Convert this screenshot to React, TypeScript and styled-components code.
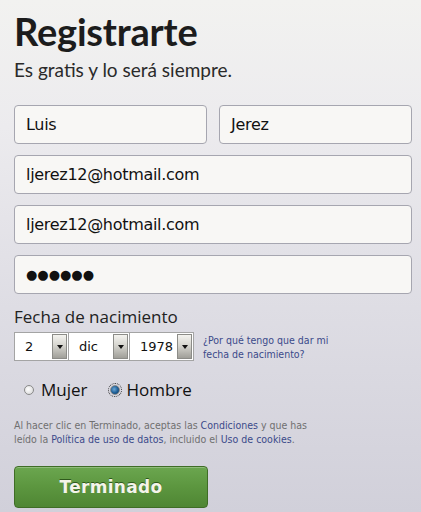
import React from 'react';
import styled, { createGlobalStyle } from 'styled-components';

const GlobalStyle = createGlobalStyle`
  html, body {
    margin: 0;
    padding: 0;
  }
  body {
    background: #d1d0da;
  }
`;

const Page = styled.div`
  width: 421px;
  height: 512px;
  box-sizing: border-box;
  padding: 10px 9px 0 14px;
  background: linear-gradient(to bottom, #f2f2f0 0%, #ecebee 25%, #dedde4 60%, #d1d0da 100%);
  display: flex;
  flex-direction: column;
  overflow: hidden;
`;

const Title = styled.h1`
  margin: 0;
  font-family: Lato, 'Open Sans', sans-serif;
  font-weight: 700;
  font-size: 38px;
  line-height: 42px;
  color: #1c1c1c;
  letter-spacing: -0.2px;
`;

const Subtitle = styled.p`
  margin: 6px 0 0;
  font-family: Lato, 'Open Sans', sans-serif;
  font-size: 19px;
  line-height: 24px;
  color: #2a2a2a;
`;

const Fields = styled.div`
  margin-top: 23px;
  display: flex;
  flex-direction: column;
  gap: 11px;
`;

const Row = styled.div`
  display: flex;
  gap: 12px;
`;

const TextField = styled.div<{ $secret?: boolean }>`
  width: 100%;
  height: 39px;
  flex-shrink: 1;
  box-sizing: border-box;
  border: 1px solid #a6a6b0;
  border-radius: 4px;
  background: #f8f7f5;
  display: flex;
  align-items: center;
  padding-left: 11px;
  font-family: 'DejaVu Sans', 'Open Sans', sans-serif;
  font-size: ${p => (p.$secret ? '13px' : '16px')};
  letter-spacing: ${p => (p.$secret ? '0' : '-0.3px')};
  color: #111;
`;

const Label = styled.div`
  margin-top: 11px;
  font-family: 'Open Sans', sans-serif;
  font-size: 17px;
  line-height: 24px;
  color: #222;
`;

const BirthRow = styled.div`
  margin-top: 3px;
  display: flex;
  align-items: center;
`;

const Selects = styled.div`
  display: flex;
  border: 1px solid #a4a4a4;
  background: #a4a4a4;
  gap: 1px;
`;

const Select = styled.div<{ $w: number }>`
  width: ${p => p.$w}px;
  height: 27px;
  background: #fff;
  display: flex;
  justify-content: space-between;
  align-items: stretch;
  font-family: 'DejaVu Sans', sans-serif;
  font-size: 13px;
  color: #111;
`;

const SelectValue = styled.span`
  display: flex;
  align-items: center;
  padding-left: 10px;
`;

const Arrow = styled.span`
  width: 15px;
  margin: 1px;
  box-sizing: border-box;
  border: 1px solid #8c8c88;
  background: linear-gradient(to bottom, #f4f3ef 0%, #d6d5cf 45%, #a09f99 100%);
  display: flex;
  justify-content: center;
  padding-top: 10px;
  &::after {
    content: '';
    width: 0;
    height: 0;
    border-left: 3px solid transparent;
    border-right: 3px solid transparent;
    border-top: 4px solid #111;
  }
`;

const Why = styled.a`
  margin-left: 9px;
  font-family: 'DejaVu Sans Condensed', 'DejaVu Sans', sans-serif;
  font-size: 10.5px;
  line-height: 14px;
  color: #3b4a8a;
  text-decoration: none;
`;

const Genders = styled.div`
  margin-top: 18px;
  padding-left: 10px;
  display: flex;
  align-items: center;
  gap: 22px;
`;

const Choice = styled.label`
  display: flex;
  align-items: center;
  gap: 7px;
  font-family: 'Open Sans', sans-serif;
  font-size: 17px;
  line-height: 22px;
  color: #111;
`;

const Radio = styled.span<{ $on?: boolean }>`
  width: 10px;
  height: 10px;
  box-sizing: border-box;
  border-radius: 50%;
  border: 1px solid #8a8a8a;
  background: ${p =>
    p.$on
      ? 'radial-gradient(circle at 40% 40%, #6aa8d8 0, #1d5c93 55%, #123e66 100%)'
      : 'radial-gradient(circle at 40% 40%, #ffffff 0, #e4e4e4 60%, #cfcfcf 100%)'};
  outline: ${p => (p.$on ? '1px dotted #333' : 'none')};
  outline-offset: 1px;
`;

const Terms = styled.p`
  margin: 17px 0 0;
  font-family: 'DejaVu Sans Condensed', 'DejaVu Sans', sans-serif;
  font-size: 10.5px;
  line-height: 14px;
  color: #707070;
  width: 300px;
`;

const TermsLink = styled.a`
  color: #3b4a8a;
  text-decoration: none;
`;

const Submit = styled.button`
  margin-top: 20px;
  width: 194px;
  height: 42px;
  border: 1px solid #3f6d26;
  border-radius: 4px;
  background: linear-gradient(to bottom, #6ba64f 0%, #5c963f 50%, #4f8634 100%);
  box-shadow: inset 0 1px 0 rgba(255, 255, 255, 0.25);
  color: #f4f4ea;
  font-family: 'DejaVu Sans', sans-serif;
  font-weight: 700;
  font-size: 17px;
  letter-spacing: 0.3px;
  text-shadow: 0 -1px 0 #2f5a1c;
  cursor: pointer;
`;

const App = () => (
  <Page>
    <GlobalStyle />
    <Title>Registrarte</Title>
    <Subtitle>Es gratis y lo será siempre.</Subtitle>
    <Fields>
      <Row>
        <TextField>Luis</TextField>
        <TextField>Jerez</TextField>
      </Row>
      <TextField>ljerez12@hotmail.com</TextField>
      <TextField>ljerez12@hotmail.com</TextField>
      <TextField $secret>●●●●●●</TextField>
    </Fields>
    <Label>Fecha de nacimiento</Label>
    <BirthRow>
      <Selects>
        <Select $w={53}>
          <SelectValue>2</SelectValue>
          <Arrow />
        </Select>
        <Select $w={60}>
          <SelectValue>dic</SelectValue>
          <Arrow />
        </Select>
        <Select $w={63}>
          <SelectValue>1978</SelectValue>
          <Arrow />
        </Select>
      </Selects>
      <Why href="#">
        ¿Por qué tengo que dar mi
        <br />
        fecha de nacimiento?
      </Why>
    </BirthRow>
    <Genders>
      <Choice>
        <Radio />
        Mujer
      </Choice>
      <Choice>
        <Radio $on />
        Hombre
      </Choice>
    </Genders>
    <Terms>
      Al hacer clic en Terminado, aceptas las <TermsLink href="#">Condiciones</TermsLink> y que has
      leído la <TermsLink href="#">Política de uso de datos</TermsLink>, incluido el{' '}
      <TermsLink href="#">Uso de cookies</TermsLink>.
    </Terms>
    <Submit type="button">Terminado</Submit>
  </Page>
);

export default App;
